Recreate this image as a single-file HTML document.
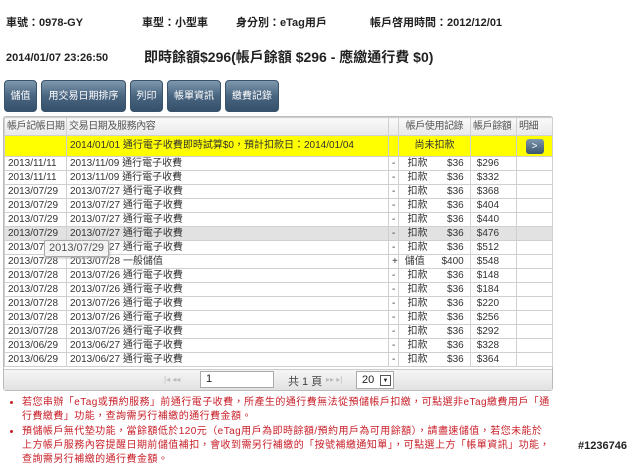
<!DOCTYPE html>
<html><head><meta charset="utf-8"><style>
*{margin:0;padding:0;box-sizing:border-box}
body{width:640px;height:455px;overflow:hidden;background:#fff;font-family:"Liberation Sans","Noto Sans CJK TC",sans-serif;color:#222;position:relative}
.a{position:absolute;white-space:nowrap}
.b{font-weight:bold;font-size:11px;color:#222}
.btn{position:absolute;top:80px;height:32px;border-radius:4px;background:linear-gradient(#7d98ae,#4a6580 50%,#34506b);color:#fff;font-size:10px;line-height:32px;text-align:center;border:1px solid #3a536b}
table{position:absolute;left:4px;top:117px;width:548px;border-collapse:collapse;font-size:10px;color:#333;table-layout:fixed}
td{border:1px solid #d0d0d0;height:14px;line-height:12px;padding:0 3px;white-space:nowrap;overflow:hidden}
tr.h td{height:18px;background:linear-gradient(#fafafa,#e8e8e8);color:#555;letter-spacing:-0.4px;padding:0 2px}
tr.y td{background:#ffff00;height:21px}
tr.g td{background:#e2e2e2}
.c{text-align:center}
.frame{position:absolute;left:3px;top:116px;width:550px;height:275px;border:1px solid #bbb;border-radius:3px}
.pager{position:absolute;left:4px;top:369px;width:548px;height:21px;background:linear-gradient(#f6f6f6,#e2e2e2);border-top:1px solid #ccc}
ul{position:absolute;left:22px;top:396px;width:530px;color:#c8202a;font-size:10px;line-height:14px;letter-spacing:0.45px}
li{margin-bottom:1px}
</style></head><body>
<div class="a b" style="left:6px;top:14px">車號：0978-GY</div>
<div class="a b" style="left:142px;top:14px">車型：小型車</div>
<div class="a b" style="left:236px;top:14px">身分別：eTag用戶</div>
<div class="a b" style="left:370px;top:14px">帳戶啓用時間：2012/12/01</div>
<div class="a b" style="left:6px;top:52px">2014/01/07 23:26:50</div>
<div class="a" style="left:144px;top:47px;font-size:14px;font-weight:bold">即時餘額$296(帳戶餘額 $296 - 應繳通行費 $0)</div>
<div class="btn" style="left:4px;width:33px">儲值</div>
<div class="btn" style="left:41px;width:85px">用交易日期排序</div>
<div class="btn" style="left:130px;width:33px">列印</div>
<div class="btn" style="left:167px;width:54px">帳單資訊</div>
<div class="btn" style="left:225px;width:54px">繳費記錄</div>
<div class="frame"></div>
<table>
<colgroup><col style="width:62px"><col style="width:322px"><col style="width:10px"><col style="width:72px"><col style="width:46px"><col style="width:36px"></colgroup>
<tr class="h"><td>帳戶記帳日期</td><td>交易日期及服務內容</td><td></td><td class="c">帳戶使用記錄</td><td>帳戶餘額</td><td>明細</td></tr>
<tr class="y"><td></td><td>2014/01/01 通行電子收費即時試算$0，預計扣款日：2014/01/04</td><td></td><td class="c">尚未扣款</td><td></td><td class="c"><span style="display:inline-block;width:18px;height:15px;border-radius:3px;background:linear-gradient(#7d98ae,#3b5670);color:#fff;font-size:10px;line-height:15px">&gt;</span></td></tr>
<tr><td>2013/11/11</td><td>2013/11/09 通行電子收費</td><td class="c">-</td><td>&nbsp;&nbsp;扣款&nbsp;&nbsp;&nbsp;&nbsp;&nbsp;&nbsp;&nbsp;$36</td><td>&nbsp;$296</td><td></td></tr>
<tr><td>2013/11/11</td><td>2013/11/09 通行電子收費</td><td class="c">-</td><td>&nbsp;&nbsp;扣款&nbsp;&nbsp;&nbsp;&nbsp;&nbsp;&nbsp;&nbsp;$36</td><td>&nbsp;$332</td><td></td></tr>
<tr><td>2013/07/29</td><td>2013/07/27 通行電子收費</td><td class="c">-</td><td>&nbsp;&nbsp;扣款&nbsp;&nbsp;&nbsp;&nbsp;&nbsp;&nbsp;&nbsp;$36</td><td>&nbsp;$368</td><td></td></tr>
<tr><td>2013/07/29</td><td>2013/07/27 通行電子收費</td><td class="c">-</td><td>&nbsp;&nbsp;扣款&nbsp;&nbsp;&nbsp;&nbsp;&nbsp;&nbsp;&nbsp;$36</td><td>&nbsp;$404</td><td></td></tr>
<tr><td>2013/07/29</td><td>2013/07/27 通行電子收費</td><td class="c">-</td><td>&nbsp;&nbsp;扣款&nbsp;&nbsp;&nbsp;&nbsp;&nbsp;&nbsp;&nbsp;$36</td><td>&nbsp;$440</td><td></td></tr>
<tr class="g"><td>2013/07/29</td><td>2013/07/27 通行電子收費</td><td class="c">-</td><td>&nbsp;&nbsp;扣款&nbsp;&nbsp;&nbsp;&nbsp;&nbsp;&nbsp;&nbsp;$36</td><td>&nbsp;$476</td><td></td></tr>
<tr><td>2013/07/29</td><td>2013/07/27 通行電子收費</td><td class="c">-</td><td>&nbsp;&nbsp;扣款&nbsp;&nbsp;&nbsp;&nbsp;&nbsp;&nbsp;&nbsp;$36</td><td>&nbsp;$512</td><td></td></tr>
<tr><td>2013/07/28</td><td>2013/07/28 一般儲值</td><td class="c">+</td><td>&nbsp;儲值&nbsp;&nbsp;&nbsp;&nbsp;&nbsp;&nbsp;$400</td><td>&nbsp;$548</td><td></td></tr>
<tr><td>2013/07/28</td><td>2013/07/26 通行電子收費</td><td class="c">-</td><td>&nbsp;&nbsp;扣款&nbsp;&nbsp;&nbsp;&nbsp;&nbsp;&nbsp;&nbsp;$36</td><td>&nbsp;$148</td><td></td></tr>
<tr><td>2013/07/28</td><td>2013/07/26 通行電子收費</td><td class="c">-</td><td>&nbsp;&nbsp;扣款&nbsp;&nbsp;&nbsp;&nbsp;&nbsp;&nbsp;&nbsp;$36</td><td>&nbsp;$184</td><td></td></tr>
<tr><td>2013/07/28</td><td>2013/07/26 通行電子收費</td><td class="c">-</td><td>&nbsp;&nbsp;扣款&nbsp;&nbsp;&nbsp;&nbsp;&nbsp;&nbsp;&nbsp;$36</td><td>&nbsp;$220</td><td></td></tr>
<tr><td>2013/07/28</td><td>2013/07/26 通行電子收費</td><td class="c">-</td><td>&nbsp;&nbsp;扣款&nbsp;&nbsp;&nbsp;&nbsp;&nbsp;&nbsp;&nbsp;$36</td><td>&nbsp;$256</td><td></td></tr>
<tr><td>2013/07/28</td><td>2013/07/26 通行電子收費</td><td class="c">-</td><td>&nbsp;&nbsp;扣款&nbsp;&nbsp;&nbsp;&nbsp;&nbsp;&nbsp;&nbsp;$36</td><td>&nbsp;$292</td><td></td></tr>
<tr><td>2013/06/29</td><td>2013/06/27 通行電子收費</td><td class="c">-</td><td>&nbsp;&nbsp;扣款&nbsp;&nbsp;&nbsp;&nbsp;&nbsp;&nbsp;&nbsp;$36</td><td>&nbsp;$328</td><td></td></tr>
<tr><td>2013/06/29</td><td>2013/06/27 通行電子收費</td><td class="c">-</td><td>&nbsp;&nbsp;扣款&nbsp;&nbsp;&nbsp;&nbsp;&nbsp;&nbsp;&nbsp;$36</td><td>&nbsp;$364</td><td></td></tr>
</table>
<div class="a" style="left:44px;top:240px;height:17px;padding:0 4px;border:1px solid #aaa;border-radius:2px;background:#f4f4f4;font-size:11px;line-height:15px;color:#555;box-shadow:1px 1px 2px #bbb">2013/07/29</div>
<div class="pager">
<div class="a" style="left:160px;top:5px;font-size:8px;color:#bbb">|◂ ◂◂</div>
<div class="a" style="left:196px;top:1px;width:74px;height:17px;border:1px solid #aaa;background:#fff;font-size:11px;line-height:15px;padding-left:5px">1</div>
<div class="a" style="left:284px;top:3px;font-size:11px;color:#444">共 1 頁</div>
<div class="a" style="left:322px;top:5px;font-size:8px;color:#bbb">▸▸ ▸|</div>
<div class="a" style="left:352px;top:1px;width:38px;height:18px;border:1px solid #aaa;background:#fff;font-size:11px;line-height:16px;padding-left:5px">20<span style="position:absolute;right:2px;top:3px;width:11px;height:11px;border:1px solid #555;font-size:6px;line-height:10px;text-align:center">▼</span></div>
</div>
<ul>
<li>若您串辦「eTag或預約服務」前通行電子收費，所產生的通行費無法從預儲帳戶扣繳，可點選非eTag繳費用戶「通行費繳費」功能，查詢需另行補繳的通行費金額。</li>
<li>預儲帳戶無代墊功能，當餘額低於120元（eTag用戶為即時餘額/預約用戶為可用餘額），請盡速儲值，若您未能於上方帳戶服務內容提醒日期前儲值補扣，會收到需另行補繳的「按號補繳通知單」，可點選上方「帳單資訊」功能，查詢需另行補繳的通行費金額。</li>
</ul>
<div class="a" style="left:578px;top:440px;font-size:11px;font-weight:bold;color:#222">#1236746</div>
</body></html>
